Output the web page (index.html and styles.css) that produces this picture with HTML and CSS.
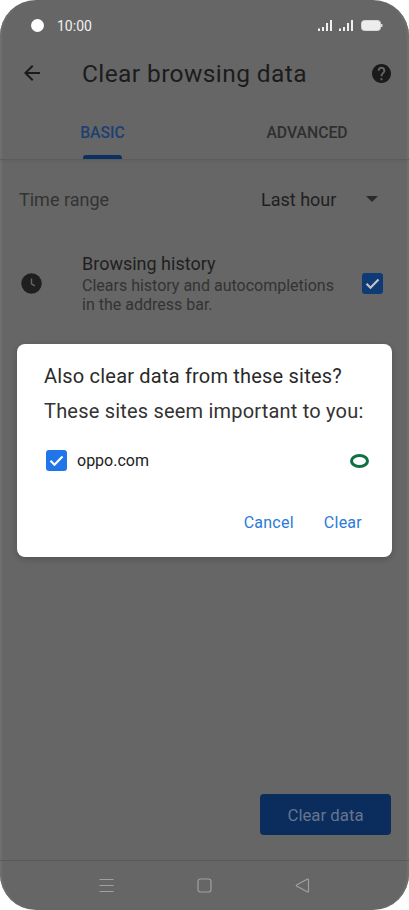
FILE: index.html
```html
<!DOCTYPE html>
<html lang="en">
<head>
  <meta charset="UTF-8">
  <meta name="viewport" content="width=device-width, initial-scale=1.0">
  <title>Clear browsing data</title>
  <link rel="stylesheet" href="styles.css">
</head>
<body>
  <div class="phone">
    <div class="status-bar">
      <span class="camera"></span>
      <span class="clock">10:00</span>
      <svg class="status-icons" width="65" height="14" viewBox="0 0 65 14">
        <g fill="#f0f0f0">
          <rect x="0" y="9.500" width="2" height="2.500"/><rect x="4" y="8" width="2" height="4"/><rect x="8" y="4" width="2" height="8"/><rect x="12" y="1" width="2" height="11"/>
          <rect x="21" y="9.500" width="2" height="2.500"/><rect x="25" y="8" width="2" height="4"/><rect x="29" y="4" width="2" height="8"/><rect x="33" y="1" width="2" height="11"/>
        </g>
        <rect x="43.500" y="1.500" width="19" height="10" rx="3" fill="#ededed" stroke="#d8d8d8" stroke-width="1"/>
        <rect x="63" y="5" width="1.500" height="3" fill="#d8d8d8"/>
      </svg>
    </div>

    <header class="toolbar">
      <svg class="back" width="24" height="24" viewBox="0 0 24 24"><path d="M20 11H7.830l5.590-5.590L12 4l-8 8 8 8 1.410-1.410L7.830 13H20v-2z" fill="#1a1a1a"/></svg>
      <h1 class="title">Clear browsing data</h1>
      <svg class="help" width="19" height="19" viewBox="2 2 20 20"><path d="M12 2C6.480 2 2 6.480 2 12s4.480 10 10 10 10-4.480 10-10S17.520 2 12 2zm1 17h-2v-2h2v2zm2.070-7.750l-.9.920C13.450 12.900 13 13.500 13 15h-2v-.5c0-1.100.45-2.100 1.170-2.830l1.240-1.260c.37-.36.59-.86.59-1.410 0-1.100-.9-2-2-2s-2 .9-2 2H8c0-2.210 1.790-4 4-4s4 1.790 4 4c0 .88-.36 1.680-.93 2.250z" fill="#1a1a1a"/></svg>
    </header>

    <nav class="tabs">
      <div class="tab tab-active">BASIC</div>
      <div class="tab">ADVANCED</div>
    </nav>

    <main class="content">
      <div class="range-row">
        <span class="range-label">Time range</span>
        <span class="range-value">Last hour</span>
        <span class="caret"></span>
      </div>
      <div class="option">
        <svg class="clock-icon" width="21" height="21" viewBox="0 0 21 21">
          <circle cx="10.500" cy="10.500" r="10.200" fill="#1f1f1f"/>
          <path d="M10.500 5.500v5.300l3.400 2" fill="none" stroke="#666" stroke-width="1.400"/>
        </svg>
        <div class="option-text">
          <div class="option-title">Browsing history</div>
          <div class="option-desc">Clears history and autocompletions in the address bar.</div>
        </div>
        <span class="check check-dim">
          <svg width="21" height="21" viewBox="0 0 21 21"><path d="M4.500 10.800l4 4 8-8.300" fill="none" stroke="#c4c4c4" stroke-width="2.200"/></svg>
        </span>
      </div>
    </main>

    <div class="footer">
      <button class="clear-data">Clear data</button>
    </div>

    <div class="nav-bar">
      <svg width="15" height="15" viewBox="0 0 15 15"><path d="M.5 1.500h14M.5 7.500h14M.5 13.500h14" stroke="#a0a0a0" stroke-width="1.200" fill="none"/></svg>
      <svg width="15" height="15" viewBox="0 0 15 15"><rect x="1" y="1" width="13" height="13" rx="2.500" stroke="#a0a0a0" stroke-width="1.200" fill="none"/></svg>
      <svg width="15" height="15" viewBox="0 0 15 15"><path d="M13.500 1.500v12a.6.6 0 0 1-.9.400L1.500 8a.6.6 0 0 1 0-1L12.600 1.100a.6.6 0 0 1 .9.400z" stroke="#a0a0a0" stroke-width="1.200" fill="none"/></svg>
    </div>

    <div class="dialog">
      <div class="dialog-title">Also clear data from these sites?</div>
      <div class="dialog-sub">These sites seem important to you:</div>
      <div class="site-row">
        <span class="check">
          <svg width="21" height="21" viewBox="0 0 21 21"><path d="M4.500 10.800l4 4 8-8.300" fill="none" stroke="#fff" stroke-width="2.200"/></svg>
        </span>
        <span class="site-name">oppo.com</span>
        <span class="site-icon"></span>
      </div>
      <div class="dialog-actions">
        <span class="action">Cancel</span>
        <span class="action">Clear</span>
      </div>
    </div>
  </div>
</body>
</html>
```

FILE: styles.css
```css
html, body {
  margin: 0;
  padding: 0;
  background: #fff;
}
body {
  font-family: 'Roboto', sans-serif;
  width: 409px;
  height: 910px;
  overflow: hidden;
}
.phone {
  position: relative;
  width: 409px;
  height: 910px;
  background: #666;
  border-radius: 36px;
  overflow: hidden;
  display: flex;
  flex-direction: column;
  box-shadow: inset 4px 0 2px -2px #707070, inset -4px 0 2px -2px #707070;
}
.status-bar {
  height: 51px;
  flex: none;
  display: flex;
  align-items: center;
  padding: 0 26px 0 31px;
  color: #f0f0f0;
}
.camera {
  width: 13px;
  height: 13px;
  border-radius: 50%;
  background: #fff;
}
.clock {
  margin-left: 13px;
  font-size: 14px;
}
.status-icons {
  margin-left: auto;
}
.toolbar {
  height: 44px;
  flex: none;
  display: flex;
  align-items: center;
  padding: 0 18px 0 20px;
}
.title {
  margin: 0 0 0 38px;
  font-family: 'Roboto', sans-serif;
  font-size: 24.500px;
  font-weight: 400;
  letter-spacing: 0.4px;
  color: #1c1c1c;
  flex: 1;
}
.tabs {
  height: 64px;
  flex: none;
  display: flex;
  border-bottom: 1px solid #5c5c5c;
  box-shadow: 0 2px 3px rgba(0, 0, 0, 0.05);
}
.tab {
  font-size: 15.750px;
  font-weight: 500;
  color: #2f2f2f;
  text-align: center;
  padding-top: 28px;
  position: relative;
  white-space: nowrap;
}
.tab-active {
  width: 47px;
  margin-left: 79px;
  color: #1d3f72;
}
.tab-active::after {
  content: "";
  position: absolute;
  left: 4px;
  right: 4px;
  bottom: 0;
  height: 4px;
  background: #0d3064;
  border-radius: 3px 3px 0 0;
}
.tab:last-child {
  width: 84px;
  margin-left: 139px;
}
.content {
  flex: 1;
  padding: 0 19px;
}
.range-row {
  height: 78px;
  display: flex;
  align-items: center;
}
.range-label {
  font-size: 18px;
  color: #333;
  width: 242px;
}
.range-value {
  font-size: 18px;
  color: #1f1f1f;
  width: 105px;
}
.caret {
  width: 0;
  height: 0;
  border-left: 6px solid transparent;
  border-right: 6px solid transparent;
  border-top: 6px solid #2a2a2a;
}
.option {
  display: flex;
  align-items: center;
  margin-top: 15px;
}
.clock-icon {
  flex: none;
  margin: 0 40px 0 2px;
}
.option-text {
  width: 258px;
}
.option-title {
  font-size: 18px;
  line-height: 21px;
  color: #1f1f1f;
}
.option-desc {
  font-size: 16px;
  line-height: 19px;
  color: #333;
  margin-top: 2px;
}
.check {
  flex: none;
  width: 21px;
  height: 21px;
  background: #2076e8;
  border-radius: 3px;
  display: block;
}
.check svg {
  display: block;
}
.check-dim {
  background: #0e3a75;
  margin-left: 22px;
}
.footer {
  display: flex;
  justify-content: flex-end;
  padding: 0 18px 25px 0;
}
.clear-data {
  width: 131px;
  height: 41px;
  border: none;
  border-radius: 4px;
  background: #0a2d5e;
  color: #66758c;
  font-family: 'Roboto', sans-serif;
  font-size: 16.800px;
  font-weight: 400;
  padding: 0;
}
.nav-bar {
  height: 49px;
  flex: none;
  border-top: 1px solid #5a5a5a;
  display: flex;
  justify-content: center;
  align-items: center;
  gap: 83px;
}
.dialog {
  position: absolute;
  left: 17px;
  top: 344px;
  width: 375px;
  height: 213px;
  box-sizing: border-box;
  background: #fff;
  border-radius: 8px;
  box-shadow: 0 2px 6px rgba(0, 0, 0, 0.2);
  padding: 20px 23px 0 27px;
  display: flex;
  flex-direction: column;
}
.dialog-title {
  font-size: 20px;
  line-height: 24px;
  letter-spacing: 0.2px;
  color: #2a2a2a;
  white-space: nowrap;
}
.dialog-sub {
  font-size: 20px;
  line-height: 24px;
  letter-spacing: 0.2px;
  color: #333;
  margin-top: 11px;
  white-space: nowrap;
}
.site-row {
  display: flex;
  align-items: center;
  margin-top: 27px;
  padding-left: 2px;
}
.site-name {
  font-size: 16px;
  color: #222;
  margin-left: 10px;
  flex: 1;
}
.site-icon {
  width: 13px;
  height: 8px;
  border: 3px solid #0f7040;
  border-radius: 50%;
}
.dialog-actions {
  display: flex;
  justify-content: flex-end;
  gap: 30px;
  margin-top: 42px;
  padding-right: 7px;
}
.action {
  font-size: 16px;
  letter-spacing: 0.25px;
  color: #2a7bd8;
}
```
